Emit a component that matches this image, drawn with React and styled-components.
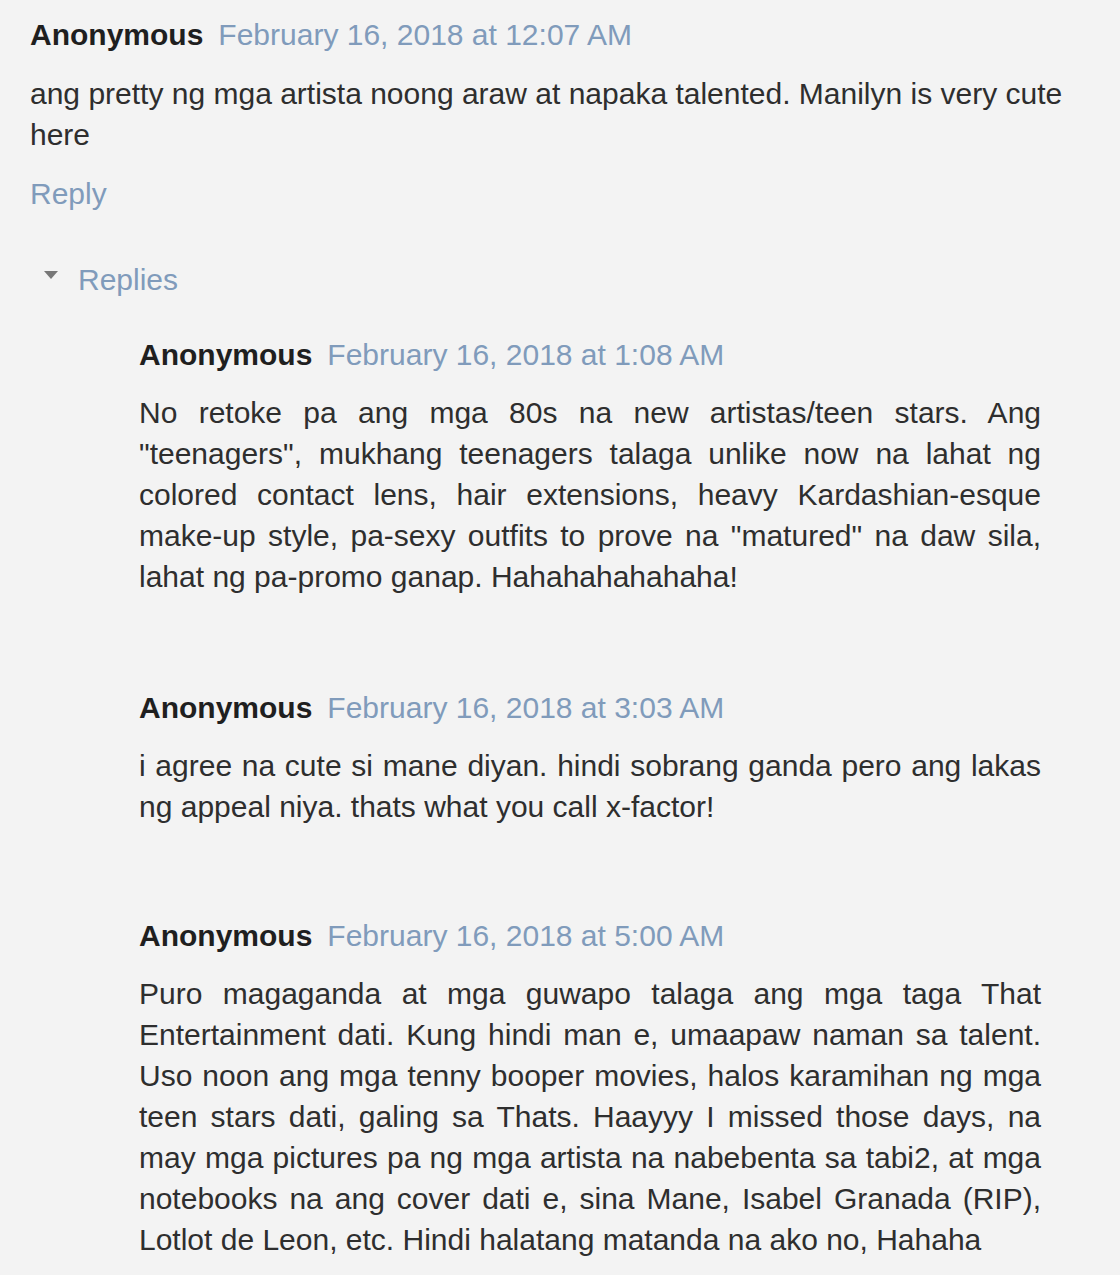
import React from "react";
import styled, { createGlobalStyle } from "styled-components";

const Global = createGlobalStyle`
  html, body { margin: 0; padding: 0; background: #f3f3f3; }
  body { font-family: "Liberation Sans", Arial, sans-serif; }
`;

const Page = styled.div`
  width: 1120px;
  min-height: 1275px;
  box-sizing: border-box;
  padding: 14px 0 0 30px;
  background: #f3f3f3;
  font-family: "Liberation Sans", Arial, sans-serif;
  font-size: 30px;
  line-height: 41px;
  color: #2b2b2b;
`;

const Header = styled.div`
  display: flex;
  align-items: baseline;
  gap: 15px;
  white-space: nowrap;
`;

const Name = styled.span`
  font-weight: bold;
  color: #1f1f1f;
`;

const DateLink = styled.a`
  color: #809bbb;
  text-decoration: none;
`;

const Body = styled.p`
  margin: ${(p) => p.$top}px 0 0 0;
  width: ${(p) => p.$width}px;
  text-align: ${(p) => (p.$justify ? "justify" : "left")};
  color: #2e2e2e;
`;

const ReplyLink = styled.a`
  display: block;
  margin-top: 18px;
  color: #809bbb;
  text-decoration: none;
`;

const Toggle = styled.div`
  display: flex;
  align-items: center;
  margin-top: 45px;
  padding-left: 14px;
  gap: 20px;
`;

const Triangle = styled.span`
  width: 0;
  height: 0;
  border-left: 7px solid transparent;
  border-right: 7px solid transparent;
  border-top: 8px solid #777;
  margin-top: -10px;
`;

const ToggleText = styled.span`
  color: #809bbb;
`;

const Thread = styled.div`
  display: flex;
  flex-direction: column;
  padding-left: 109px;
  margin-top: 34px;
`;

const ReplyItem = styled.div`
  margin-top: ${(p) => p.$top}px;
`;

const replies = [
  {
    date: "February 16, 2018 at 1:08 AM",
    top: 0,
    text:
      'No retoke pa ang mga 80s na new artistas/teen stars. Ang "teenagers", mukhang teenagers talaga unlike now na lahat ng colored contact lens, hair extensions, heavy Kardashian-esque make-up style, pa-sexy outfits to prove na "matured" na daw sila, lahat ng pa-promo ganap. Hahahahahahaha!',
  },
  {
    date: "February 16, 2018 at 3:03 AM",
    top: 90,
    text:
      "i agree na cute si mane diyan. hindi sobrang ganda pero ang lakas ng appeal niya. thats what you call x-factor!",
  },
  {
    date: "February 16, 2018 at 5:00 AM",
    top: 88,
    text:
      "Puro magaganda at mga guwapo talaga ang mga taga That Entertainment dati. Kung hindi man e, umaapaw naman sa talent. Uso noon ang mga tenny booper movies, halos karamihan ng mga teen stars dati, galing sa Thats. Haayyy I missed those days, na may mga pictures pa ng mga artista na nabebenta sa tabi2, at mga notebooks na ang cover dati e, sina Mane, Isabel Granada (RIP), Lotlot de Leon, etc. Hindi halatang matanda na ako no, Hahaha",
  },
];

export default function App() {
  return (
    <>
      <Global />
      <Page>
        <Header>
          <Name>Anonymous</Name>
          <DateLink href="#">February 16, 2018 at 12:07 AM</DateLink>
        </Header>
        <Body $top={18} $width={1075}>
          ang pretty ng mga artista noong araw at napaka talented. Manilyn is very cute here
        </Body>
        <ReplyLink href="#">Reply</ReplyLink>
        <Toggle>
          <Triangle />
          <ToggleText>Replies</ToggleText>
        </Toggle>
        <Thread>
          {replies.map((r, i) => (
            <ReplyItem key={i} $top={r.top}>
              <Header>
                <Name>Anonymous</Name>
                <DateLink href="#">{r.date}</DateLink>
              </Header>
              <Body $top={17} $width={902} $justify>
                {r.text}
              </Body>
            </ReplyItem>
          ))}
        </Thread>
      </Page>
    </>
  );
}
